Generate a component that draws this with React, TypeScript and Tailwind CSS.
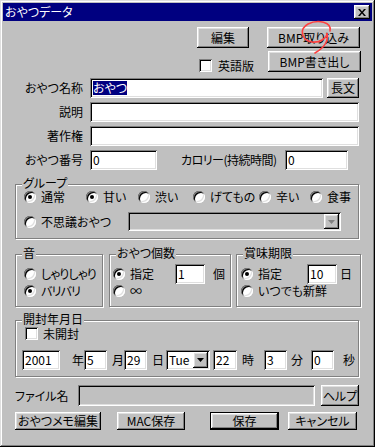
import React from "react";

const raised =
  "bg-[#c0c0c0] shadow-[inset_-1px_-1px_#000,inset_1px_1px_#fff,inset_-2px_-2px_#808080,inset_2px_2px_#dfdfdf]";
const sunken =
  "shadow-[inset_1px_1px_#808080,inset_-1px_-1px_#fff,inset_2px_2px_#000,inset_-2px_-2px_#dfdfdf]";

const Btn = ({ w, h = 21, label, def = false }: { w: string; h?: number; label: string; def?: boolean }) => (
  <div
    className={`${w} ${h === 18 ? "h-[18px]" : h === 20 ? "h-[20px]" : "h-[21px]"} ${
      def
        ? "bg-[#c0c0c0] border border-black shadow-[inset_-1px_-1px_#000,inset_1px_1px_#fff,inset_-2px_-2px_#808080,inset_2px_2px_#dfdfdf]"
        : raised
    } flex shrink-0 items-center justify-center whitespace-nowrap text-[12px] leading-none text-black`}
  >
    {label}
  </div>
);

const Field = ({ w, value = "", grey = false, h = "h-[20px]" }: { w: string; value?: string; grey?: boolean; h?: string }) => (
  <div className={`${w} ${h} ${grey ? "bg-[#c0c0c0]" : "bg-white"} ${sunken} flex shrink-0 items-center pl-[3px] text-[12px] leading-none text-black`}>
    {value}
  </div>
);

const Radio = ({ checked = false }: { checked?: boolean }) => (
  <div className="flex h-[12px] w-[12px] shrink-0 items-center justify-center rounded-full bg-white shadow-[inset_1px_1px_#808080,inset_-1px_-1px_#fff,inset_2px_2px_#000,inset_-2px_-2px_#dfdfdf]">
    {checked && <div className="h-[4px] w-[4px] rounded-full bg-black" />}
  </div>
);

const RadioItem = ({ w, label, checked = false, tight = false }: { w?: string; label: string; checked?: boolean; tight?: boolean }) => (
  <div className={`flex shrink-0 items-center gap-[5px] ${w ?? ""}`}>
    <Radio checked={checked} />
    <span className={`whitespace-nowrap text-[12px] leading-none ${tight ? "tracking-[-0.8px]" : ""}`}>{label}</span>
  </div>
);

const Check = () => <div className={`h-[13px] w-[13px] shrink-0 bg-white ${sunken}`} />;

const Group = ({ title, className, children }: { title: string; className: string; children: React.ReactNode }) => (
  <div className={`relative shrink-0 border border-[#808080] shadow-[inset_1px_1px_#fff,1px_1px_#fff] ${className}`}>
    <span className="absolute -top-[8px] left-[6px] whitespace-nowrap bg-[#c0c0c0] px-[1px] text-[12px] leading-[12px]">{title}</span>
    {children}
  </div>
);

const Arrow = ({ grey = false }: { grey?: boolean }) => (
  <svg width="7" height="4" viewBox="0 0 7 4">
    <path d="M0 0H7L3.5 4Z" fill={grey ? "#808080" : "#000"} />
  </svg>
);

export default function App() {
  return (
    <div
      className="relative flex h-[447px] w-[375px] flex-col bg-[#c0c0c0] p-[3px] text-black [font-feature-settings:'palt'] shadow-[inset_-1px_-1px_#000,inset_1px_1px_#dfdfdf,inset_-2px_-2px_#808080,inset_2px_2px_#fff]"
      style={{ fontFamily: '"Noto Sans CJK JP", "Liberation Sans", sans-serif' }}
    >
      {/* title bar */}
      <div className="flex h-[18px] shrink-0 items-center justify-between bg-[#000080] px-[2px]">
        <span className="text-[12px] leading-none text-white">おやつデータ</span>
        <div className={`${raised} flex h-[14px] w-[16px] items-center justify-center`}>
          <svg width="8" height="7" viewBox="0 0 8 7">
            <path d="M0 0h2l2 2.5L6 0h2L5 3.5 8 7H6L4 4.5 2 7H0l3-3.5Z" fill="#000" />
          </svg>
        </div>
      </div>

      {/* top buttons */}
      <div className="mt-[6px] flex h-[21px] pl-[194px]">
        <Btn w="w-[52px]" label="編集" />
        <div className="ml-[18px]">
          <Btn w="w-[93px]" label="BMP取り込み" />
        </div>
      </div>
      <div className="mt-[3px] flex h-[21px] pl-[196px]">
        <div className="flex h-[13px] items-center gap-[6px] self-end">
          <Check />
          <span className="whitespace-nowrap text-[12px] leading-none">英語版</span>
        </div>
        <div className="ml-[14px]">
          <Btn w="w-[93px]" label="BMP書き出し" />
        </div>
      </div>

      {/* fields */}
      <div className="mt-[6px] flex flex-col gap-[4px]">
        <div className="flex h-[20px] items-center">
          <span className="w-[80px] whitespace-nowrap text-right text-[12px] leading-none">おやつ名称</span>
          <div className="ml-[7px]">
            <div className={`flex h-[20px] w-[233px] items-center bg-white pl-[3px] ${sunken}`}>
              <span className="bg-[#000080] text-[12px] leading-[14px] text-white">おやつ</span>
            </div>
          </div>
          <div className="ml-[4px]">
            <Btn w="w-[32px]" h={20} label="長文" />
          </div>
        </div>
        <div className="flex h-[20px] items-center">
          <span className="w-[80px] text-right text-[12px] leading-none">説明</span>
          <div className="ml-[7px]">
            <Field w="w-[269px]" />
          </div>
        </div>
        <div className="flex h-[20px] items-center">
          <span className="w-[80px] text-right text-[12px] leading-none">著作権</span>
          <div className="ml-[7px]">
            <Field w="w-[269px]" />
          </div>
        </div>
        <div className="flex h-[20px] items-center">
          <span className="w-[80px] whitespace-nowrap text-right text-[12px] leading-none">おやつ番号</span>
          <div className="ml-[7px]">
            <Field w="w-[67px]" value="0" />
          </div>
          <span className="ml-[24px] w-[104px] whitespace-nowrap text-[12px] leading-none tracking-[-0.5px]">カロリー(持続時間)</span>
          <Field w="w-[63px]" value="0" />
        </div>
      </div>

      {/* group */}
      <Group title="グループ" className="ml-[12px] mt-[14px] w-[344px] pb-[7px] pl-[8px] pt-[5px]">
        <div className="flex h-[13px] items-center">
          <RadioItem w="w-[62px]" label="通常" checked />
          <RadioItem w="w-[52px]" label="甘い" checked />
          <RadioItem w="w-[55px]" label="渋い" />
          <RadioItem w="w-[66px]" label="げてもの" />
          <RadioItem w="w-[51px]" label="辛い" />
          <RadioItem label="食事" />
        </div>
        <div className="mt-[9px] flex h-[19px] items-center">
          <RadioItem w="w-[104px]" label="不思議おやつ" />
          <div className={`flex h-[19px] w-[213px] items-center justify-end bg-[#c0c0c0] pr-[2px] ${sunken}`}>
            <div className={`${raised} flex h-[15px] w-[15px] items-center justify-center`}>
              <Arrow grey />
            </div>
          </div>
        </div>
      </Group>

      {/* three groups */}
      <div className="mt-[15px] ml-[12px] flex">
        <Group title="音" className="w-[88px] pb-[8px] pl-[8px] pt-[9px]">
          <div className="flex h-[20px] items-center">
            <RadioItem label="しゃりしゃり" tight />
          </div>
          <div className="flex h-[14px] items-center">
            <RadioItem label="バリバリ" checked tight />
          </div>
        </Group>
        <Group title="おやつ個数" className="ml-[6px] w-[122px] pb-[8px] pl-[3px] pt-[9px]">
          <div className="flex h-[20px] items-center">
            <RadioItem w="w-[62px]" label="指定" checked />
            <Field w="w-[30px]" value="1" />
            <span className="ml-[8px] text-[12px] leading-none">個</span>
          </div>
          <div className="flex h-[14px] items-center">
            <RadioItem label="∞" />
          </div>
        </Group>
        <Group title="賞味期限" className="ml-[5px] w-[125px] pb-[8px] pl-[4px] pt-[9px]">
          <div className="flex h-[20px] items-center">
            <RadioItem w="w-[66px]" label="指定" checked />
            <Field w="w-[30px]" value="10" />
            <span className="ml-[3px] text-[12px] leading-none">日</span>
          </div>
          <div className="flex h-[14px] items-center">
            <RadioItem label="いつでも新鮮" />
          </div>
        </Group>
      </div>

      {/* open date */}
      <Group title="開封年月日" className="ml-[12px] mt-[13px] w-[344px] pb-[6px] pl-[6px] pt-[6px]">
        <div className="flex h-[13px] items-center gap-[5px] pl-[3px]">
          <Check />
          <span className="text-[12px] leading-none">未開封</span>
        </div>
        <div className="mt-[10px] flex h-[20px] items-center text-[12px] leading-none">
          <Field w="w-[38px]" value="2001" />
          <span className="ml-[12px] w-[12px]">年</span>
          <Field w="w-[23px]" value="5" />
          <span className="ml-[5px] w-[12px]">月</span>
          <Field w="w-[23px]" value="29" />
          <span className="ml-[5px] w-[12px]">日</span>
          <div className={`ml-[2px] flex h-[20px] w-[44px] items-center justify-between bg-white pl-[3px] pr-[2px] ${sunken}`}>
            <span>Tue</span>
            <div className={`${raised} flex h-[16px] w-[15px] items-center justify-center`}>
              <Arrow />
            </div>
          </div>
          <div className="ml-[3px]">
            <Field w="w-[24px]" value="22" />
          </div>
          <span className="ml-[5px] w-[12px]">時</span>
          <div className="ml-[10px]">
            <Field w="w-[23px]" value="3" />
          </div>
          <span className="ml-[4px] w-[12px]">分</span>
          <div className="ml-[8px]">
            <Field w="w-[23px]" value="0" />
          </div>
          <span className="ml-[9px] w-[12px]">秒</span>
        </div>
      </Group>

      {/* file name */}
      <div className="mt-[8px] ml-[12px] flex h-[21px] items-center">
        <span className="w-[63px] whitespace-nowrap text-[12px] leading-none">ファイル名</span>
        <Field w="w-[237px]" h="h-[21px]" grey />
        <div className="ml-[6px]">
          <Btn w="w-[38px]" label="ヘルプ" />
        </div>
      </div>

      {/* bottom buttons */}
      <div className="mt-[6px] ml-[12px] flex">
        <Btn w="w-[86px]" h={18} label="おやつメモ編集" />
        <div className="ml-[16px]">
          <Btn w="w-[68px]" h={18} label="MAC保存" />
        </div>
        <div className="ml-[25px]">
          <Btn w="w-[69px]" h={18} label="保存" def />
        </div>
        <div className="ml-[9px]">
          <Btn w="w-[69px]" h={18} label="キャンセル" />
        </div>
      </div>

      {/* red annotation scribble */}
      <svg className="pointer-events-none absolute left-0 top-0" width="375" height="447" viewBox="0 0 375 447">
        <path
          d="M330 31 C332 22 318 19 308 24 C299 29 301 40 312 42 C320 43 327 38 327 33 C329 42 322 49 315 53"
          fill="none"
          stroke="#ff4040"
          strokeWidth="1.6"
          strokeLinecap="round"
        />
      </svg>
    </div>
  );
}
